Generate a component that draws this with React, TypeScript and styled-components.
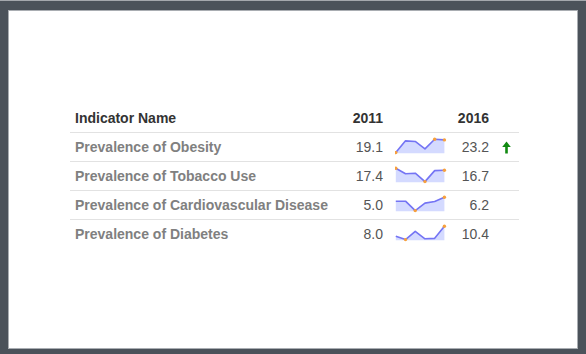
import React from "react";
import styled, { createGlobalStyle } from "styled-components";

const Global = createGlobalStyle`
  html, body {
    margin: 0;
    padding: 0;
    background: #4b525a;
  }
  body {
    font-family: "Liberation Sans", Arial, sans-serif;
    border-top: 1px solid #a4a8ad;
  }
`;

const Panel = styled.div`
  box-sizing: border-box;
  margin: 9px 0 0 8px;
  width: 570px;
  height: 339px;
  background: #ffffff;
  border: 1px solid #a9adb2;
  display: flex;
  align-items: flex-start;
  padding: 93px 0 0 61px;
`;

const Table = styled.div`
  display: flex;
  flex-direction: column;
  width: 449px;
`;

const Row = styled.div<{ $last?: boolean }>`
  display: grid;
  grid-template-columns: 270px 48px 64px 42px 25px;
  align-items: center;
  border-bottom: ${(p) => (p.$last ? "none" : "1px solid #e2e2e2")};
`;

const Cell = styled.div<{ $align?: "left" | "right" | "center"; $head?: boolean; $name?: boolean }>`
  padding: 6px 5px;
  font-size: 14px;
  line-height: 16px;
  white-space: nowrap;
  text-align: ${(p) => p.$align ?? "left"};
  font-weight: ${(p) => (p.$head || p.$name ? 700 : 400)};
  color: ${(p) => (p.$head ? "#333333" : p.$name ? "#808080" : "#555555")};
`;

const SparkCell = styled.div`
  padding-left: 7px;
  height: 20px;
  display: flex;
  align-items: center;
`;

const ArrowCell = styled.div`
  display: flex;
  justify-content: center;
  align-items: center;
  padding-right: 1px;
`;

type Item = { name: string; data: number[]; up?: boolean };

const items: Item[] = [
  { name: "Prevalence of Obesity", data: [19.1, 22.9, 22.7, 20.3, 23.4, 23.2], up: true },
  { name: "Prevalence of Tobacco Use", data: [17.4, 15.5, 15.7, 12.8, 16.6, 16.7] },
  { name: "Prevalence of Cardiovascular Disease", data: [5.0, 5.0, 2.1, 4.4, 4.9, 6.2] },
  { name: "Prevalence of Diabetes", data: [8.0, 7.2, 9.2, 7.4, 7.5, 10.4] },
];

const Sparkline: React.FC<{ data: number[] }> = ({ data }) => {
  const W = 52;
  const H = 20;
  const top = 2.3;
  const bottom = 15.6;
  const min = Math.min(...data);
  const max = Math.max(...data);
  const step = 48.6 / (data.length - 1);
  const pts = data.map((v, i) => ({
    x: 0.8 + i * step,
    y: bottom - ((v - min) / (max - min)) * (bottom - top),
  }));
  const line = pts.map((p) => `${p.x.toFixed(2)},${p.y.toFixed(2)}`).join(" ");
  const area = `${pts[0].x},16.2 ${line} ${pts[pts.length - 1].x},16.2`;
  const minI = data.indexOf(min);
  const maxI = data.indexOf(max);
  const dots = Array.from(new Set([minI, maxI, data.length - 1]));
  return (
    <svg width={W} height={H} viewBox={`0 0 ${W} ${H}`}>
      <polygon points={area} fill="#d4daff" />
      <polyline points={line} fill="none" stroke="#7474f4" strokeWidth={1.6} strokeLinejoin="round" />
      {dots.map((i) => (
        <circle key={i} cx={pts[i].x} cy={pts[i].y} r={1.7} fill="#f7a03c" />
      ))}
    </svg>
  );
};

const UpArrow: React.FC = () => (
  <svg width="9" height="13" viewBox="0 0 9 13">
    <polygon points="4.5,0.5 8.8,6 0.2,6" fill="#128a12" />
    <rect x="3.2" y="5.5" width="2.6" height="7" fill="#128a12" />
  </svg>
);

export default function App() {
  return (
    <>
      <Global />
      <Panel>
        <Table>
          <Row>
            <Cell $head>Indicator Name</Cell>
            <Cell $head $align="right">2011</Cell>
            <div />
            <Cell $head $align="right">2016</Cell>
            <div />
          </Row>
          {items.map((it, idx) => (
            <Row key={it.name} $last={idx === items.length - 1}>
              <Cell $name>{it.name}</Cell>
              <Cell $align="right">{it.data[0].toFixed(1)}</Cell>
              <SparkCell>
                <Sparkline data={it.data} />
              </SparkCell>
              <Cell $align="right">{it.data[it.data.length - 1].toFixed(1)}</Cell>
              <ArrowCell>{it.up ? <UpArrow /> : null}</ArrowCell>
            </Row>
          ))}
        </Table>
      </Panel>
    </>
  );
}
